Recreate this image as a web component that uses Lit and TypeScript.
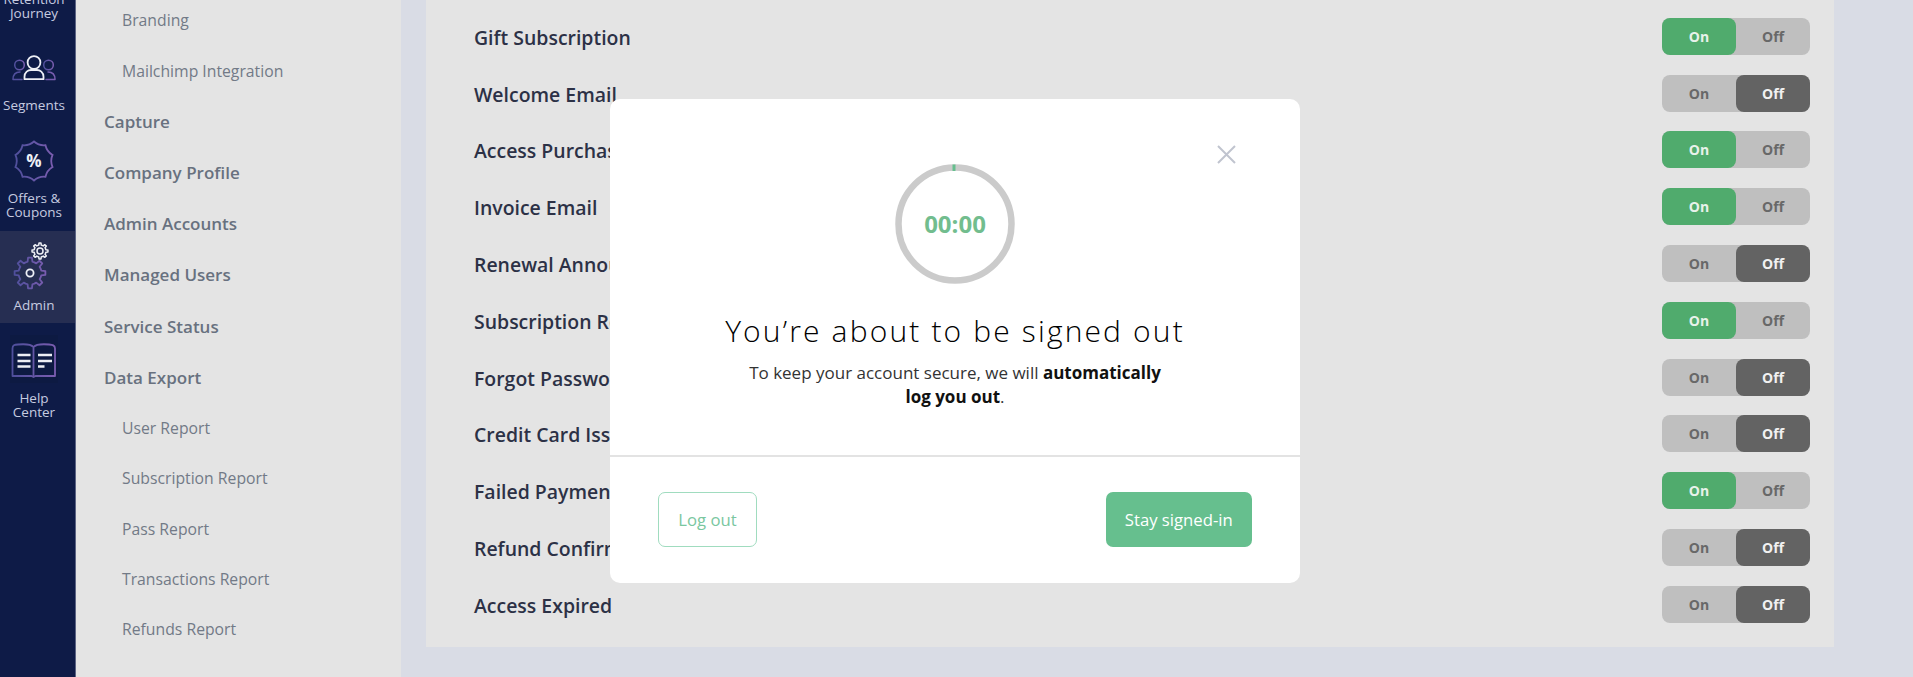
import { LitElement, html, css, svg } from "lit";
import { customElement } from "lit/decorators.js";

const SUB = new Set(["Branding","Mailchimp Integration","User Report","Subscription Report","Pass Report","Transactions Report","Refunds Report"]);
const NAV = ["Branding","Mailchimp Integration","Capture","Company Profile","Admin Accounts","Managed Users","Service Status","Data Export","User Report","Subscription Report","Pass Report","Transactions Report","Refunds Report"];
const ROWS: [string, boolean][] = [
  ["Gift Subscription", true],["Welcome Email", false],["Access Purchase", true],["Invoice Email", true],
  ["Renewal Announcement", false],["Subscription Renewal", true],["Forgot Password", false],["Credit Card Issue", false],
  ["Failed Payment", true],["Refund Confirmation", false],["Access Expired", false],
];

function scallop(cx: number, cy: number, r: number, amp: number, n: number) {
  let d = "";
  for (let i = 0; i < n; i++) {
    const a = (i / n) * Math.PI * 2 - Math.PI / 2;
    const b = ((i + 1) / n) * Math.PI * 2 - Math.PI / 2;
    const m = (a + b) / 2;
    const p = (t: number, R: number) => `${(cx + R * Math.cos(t)).toFixed(2)} ${(cy + R * Math.sin(t)).toFixed(2)}`;
    if (i === 0) d += `M${p(a, r)}`;
    d += `Q${p(m, r - amp)} ${p(b, r)}`;
  }
  return d + "Z";
}
function gear(cx: number, cy: number, ro: number, ri: number, n: number) {
  let d = "";
  const step = (Math.PI * 2) / n;
  for (let i = 0; i < n; i++) {
    const a = i * step - Math.PI / 2;
    const pts: [number, number][] = [[a - step * 0.5, ri],[a - step * 0.27, ri],[a - step * 0.16, ro],[a + step * 0.16, ro],[a + step * 0.27, ri]];
    pts.forEach(([t, R], j) => {
      d += `${i === 0 && j === 0 ? "M" : "L"}${(cx + R * Math.cos(t)).toFixed(2)} ${(cy + R * Math.sin(t)).toFixed(2)}`;
    });
  }
  return d + "Z";
}

const gradient = (id: string) => svg`<defs><linearGradient id=${id} x1="0" x2="1" y1="0" y2="0"><stop offset="0" stop-color="#4f4f9c"/><stop offset="1" stop-color="#7a5db0"/></linearGradient></defs>`;

const segmentsIcon = html`<svg width="44" height="28" viewBox="0 0 44 28" fill="none">
  ${gradient("g1")}
  <g stroke="url(#g1)" stroke-width="1.500"><circle cx="7.500" cy="11" r="4.800"/><circle cx="36.500" cy="11" r="4.800"/>
  <path d="M1 25.500c0-5 3-7.500 7-7.500M43 25.500c0-5-3-7.500-7-7.500M1 25.500h9M43 25.500h-9" stroke-linecap="round"/></g>
  <g stroke="#eef0f6" stroke-width="1.800"><circle cx="22" cy="8.500" r="6.400"/><path d="M12.500 25.200v-2.400c0-4.600 3.600-6.800 6.500-6.800h6c2.900 0 6.500 2.200 6.500 6.800v2.400z" stroke-linejoin="round"/></g>
</svg>`;
const offersIcon = html`<svg width="42" height="42" viewBox="0 0 42 42" fill="none">
  ${gradient("g2")}
  <path d=${scallop(21, 21, 19.5, 3.6, 10)} stroke="url(#g2)" stroke-width="1.800"/>
  <text x="21" y="27" text-anchor="middle" class="pct">%</text>
</svg>`;
const adminIcon = html`<svg width="44" height="48" viewBox="0 0 44 48" fill="none">
  ${gradient("g3")}
  <path d=${gear(18, 31, 15.5, 11.5, 8)} stroke="url(#g3)" stroke-width="1.800" stroke-linejoin="round"/>
  <circle cx="18" cy="31" r="3.600" stroke="#eef0f6" stroke-width="1.800"/>
  <path d=${gear(28, 9, 8, 6, 8)} stroke="#eef0f6" stroke-width="1.500" stroke-linejoin="round"/>
  <circle cx="28" cy="9" r="3" stroke="#eef0f6" stroke-width="1.500"/>
</svg>`;
const helpIcon = html`<svg width="48" height="48" viewBox="0 0 48 48" fill="none">
  ${gradient("g4")}
  <rect width="48" height="48" fill="#0d1a42"/>
  <path d="M2.500 41V13.500C2.500 10 4.500 9.800 8 9.500c7-.6 13-.3 15.500 2.500 2.500-2.800 8.500-3.100 15.500-2.500 3.500.3 6 .6 6 4V41H25.500l-2 1-2-1zM23.500 12v30" stroke="url(#g4)" stroke-width="1.800" stroke-linejoin="round"/>
  <g stroke="#eceef4" stroke-width="2.400"><path d="M7.500 20H20.500M7.500 26H20.500M7.500 31.500H20.500M28 20H42M28 26H42M28 31.500H34.500"/></g>
</svg>`;

@customElement("app-root")
export class AppRoot extends LitElement {
  static styles = css`
    :host { display: block; height: 677px; width: 1913px; overflow: hidden; position: relative; font-family: "Open Sans", "Noto Sans", sans-serif; background: #d9dce5; }
    .page { display: grid; grid-template-columns: 76px 325px 1fr; height: 677px; }
    .rail { background: #0e1b47; border-right: 1px solid #5c6484; color: #c6cbe0; display: flex; flex-direction: column; overflow: hidden; font-size: 13.500px; line-height: 13.500px; text-align: center; }
    .item { flex: none; display: flex; flex-direction: column; align-items: center; box-sizing: border-box; padding-right: 7px; }
    .ret { margin-top: -12px; height: 52px; padding-top: 5px; }
    .seg { height: 86px; padding-top: 14px; gap: 17px; }
    .off { height: 105px; padding-top: 14px; gap: 10px; }
    .adm { height: 92px; background: #262e52; padding-top: 11px; gap: 9px; }
    .hlp { height: 110px; padding-top: 12px; gap: 9px; }
    .pct { font: 700 17px "Open Sans", sans-serif; fill: #eef0f6; }
    .nav { background: #e4e4e4; display: flex; flex-direction: column; }
    .nav a { display: flex; align-items: center; flex: none; box-sizing: border-box; color: #68717f; }
    .nav .top { padding-left: 28px; font-size: 17px; font-weight: 600; height: 51.200px; }
    .nav .sub { padding-left: 46px; font-size: 15.750px; height: 50.350px; color: #727a87; }
    .nav .first { margin-top: -5px; }
    .main { padding: 0 79px 30px 25px; display: flex; height: 677px; box-sizing: border-box; }
    .panel { flex: 1; background: #e4e4e4; padding: 8px 24px 0 48px; display: flex; flex-direction: column; }
    .row { display: flex; align-items: center; justify-content: space-between; height: 56.800px; flex: none; }
    .lbl { color: #2c3146; font-size: 19.450px; font-weight: 600; padding-top: 2px; }
    .tog { display: grid; grid-template-columns: 74px 74px; height: 37px; border-radius: 8px; background: #bfbfbf; color: #686868; font-size: 14px; font-weight: 700; }
    .tog span { display: flex; align-items: center; justify-content: center; border-radius: 8px; }
    .tog .g { background: #50ab6d; color: #e8f2ea; }
    .tog .d { background: #636363; color: #f1f1f1; }
    .modal { position: absolute; left: 610px; top: 99px; width: 690px; height: 484px; box-sizing: border-box; background: #fff; border-radius: 10px; display: flex; flex-direction: column; align-items: center; }
    .close { position: absolute; left: 607px; top: 46px; }
    .timer { position: relative; width: 120px; height: 120px; margin-top: 65px; display: flex; align-items: center; justify-content: center; color: #72bd8e; font-weight: 700; font-size: 24px; padding-bottom: 2px; box-sizing: border-box; }
    .timer svg { position: absolute; inset: 0; }
    h1 { margin: 27px 0 0; font-size: 30px; font-weight: 300; letter-spacing: 2.150px; line-height: 40px; color: #000; white-space: nowrap; }
    p { margin: 10px 0 0; width: 430px; text-align: center; font-size: 17px; line-height: 23.500px; color: #333; font-weight: 400; }
    p b { font-weight: 700; color: #111; }
    .foot { margin-top: auto; height: 128px; width: 100%; box-sizing: border-box; border-top: 2px solid #e3e3e3; padding: 34.500px 48px 0; display: flex; justify-content: space-between; align-items: flex-start; }
    button { font: 400 16.700px "Open Sans", sans-serif; height: 55px; border-radius: 7px; box-sizing: border-box; }
    .ghost { width: 99px; background: #fff; border: 1px solid #a0dcbf; color: #7ac79f; }
    .solid { width: 146.500px; background: #66bf8e; border: none; color: #fff; }
  `;

  render() {
    return html`
      <div class="page">
        <aside class="rail">
          <div class="item ret"><span>Retention<br />Journey</span></div>
          <div class="item seg">${segmentsIcon}<span>Segments</span></div>
          <div class="item off">${offersIcon}<span>Offers &amp;<br />Coupons</span></div>
          <div class="item adm">${adminIcon}<span>Admin</span></div>
          <div class="item hlp">${helpIcon}<span>Help<br />Center</span></div>
        </aside>
        <nav class="nav">
          ${NAV.map((n, i) => html`<a class="${SUB.has(n) ? "sub" : "top"} ${i === 0 ? "first" : ""}">${n}</a>`)}
        </nav>
        <main class="main">
          <section class="panel">
            ${ROWS.map(([label, on]) => html`
              <div class="row">
                <span class="lbl">${label}</span>
                <div class="tog"><span class=${on ? "g" : ""}>On</span><span class=${on ? "" : "d"}>Off</span></div>
              </div>`)}
          </section>
        </main>
      </div>
      <div class="modal" role="dialog">
        <svg class="close" width="19" height="19" viewBox="0 0 19 19" fill="none"><path d="M1 1l17 17M18 1L1 18" stroke="#c0c4cf" stroke-width="2"/></svg>
        <div class="timer">
          <svg width="120" height="120" viewBox="0 0 120 120" fill="none">
            <circle cx="60" cy="60" r="56.500" stroke="#cbcbcb" stroke-width="6.500"/>
            <path d="M59 0.500v6.500" stroke="#66bf8e" stroke-width="3"/>
          </svg>
          <span>00:00</span>
        </div>
        <h1>You’re about to be signed out</h1>
        <p>To keep your account secure, we will <b>automatically log you out</b>.</p>
        <div class="foot">
          <button class="ghost">Log out</button>
          <button class="solid">Stay signed-in</button>
        </div>
      </div>
    `;
  }
}
